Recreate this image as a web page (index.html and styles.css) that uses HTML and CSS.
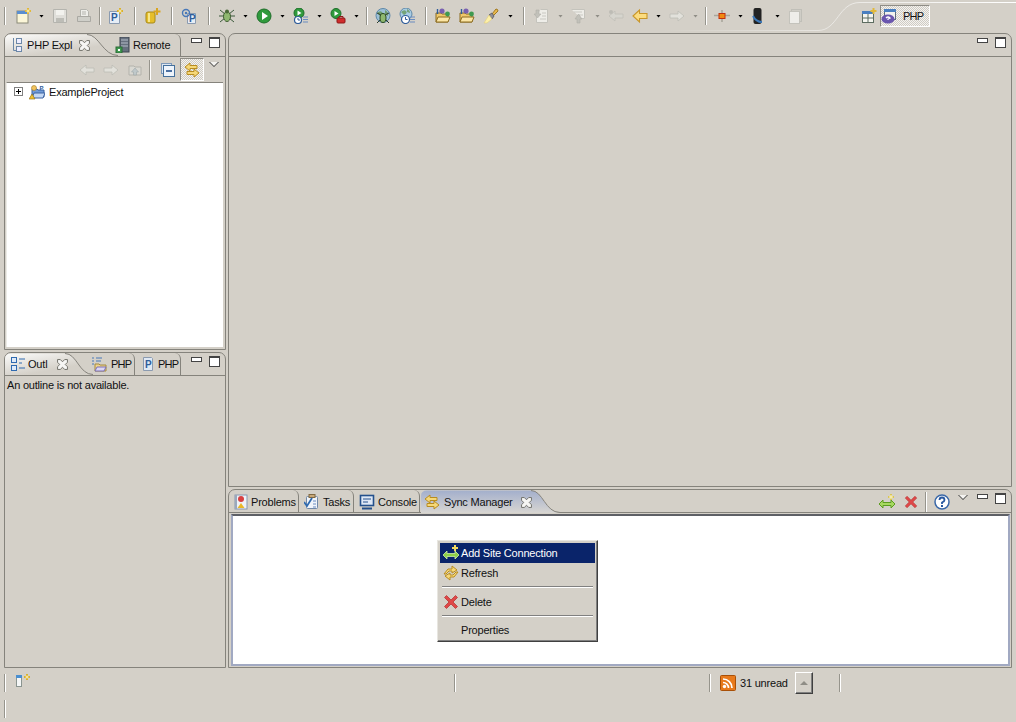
FILE: index.html
```html
<!DOCTYPE html>
<html lang="en">
<head>
<meta charset="utf-8">
<title>PHP - Eclipse</title>
<link rel="stylesheet" href="styles.css">
</head>
<body>
<svg class="defs" width="0" height="0">
  <defs>
    <linearGradient id="gw" x1="0" y1="0" x2="0.75" y2="1"><stop offset="0" stop-color="#fbfbfa"/><stop offset="0.75" stop-color="#d4d0c8"/></linearGradient>
    <linearGradient id="gb" x1="0" y1="0" x2="0" y2="1"><stop offset="0" stop-color="#a3afcc"/><stop offset="1" stop-color="#d8d6d2"/></linearGradient>
    <linearGradient id="gl" x1="0" y1="0" x2="1" y2="0"><stop offset="0" stop-color="#fff" stop-opacity="0"/><stop offset="1" stop-color="#fff"/></linearGradient>
    <symbol id="new" viewBox="0 0 16 16"><rect x="1" y="3" width="11" height="12" fill="#fbf6d8" stroke="#8a8a78"/><rect x="1" y="3" width="11" height="3" fill="#5b8fd0"/><path d="M12 0v6M9 3h6" stroke="#e2b93a" stroke-width="2"/><path d="M12 1.5v3M10.5 3h3" stroke="#fff6c0"/></symbol>
    <symbol id="save" viewBox="0 0 16 16"><path d="M1.5 1.5h13v13h-13z" fill="#e0dfda" stroke="#b4b4ae"/><rect x="4" y="2" width="8" height="5" fill="#f2f2ee"/><rect x="4" y="10" width="8" height="4" fill="#bdbdb7"/></symbol>
    <symbol id="print" viewBox="0 0 16 16"><path d="M4.5 1.5h6l2 2v5h-8z" fill="#eeeeea" stroke="#b4b4ae"/><path d="M1.5 8.5h13v5h-13z" fill="#cfcfc9" stroke="#aaa9a3"/><path d="M6 4h4M6 6h4" stroke="#b4b4ae"/></symbol>
    <symbol id="phpnew" viewBox="0 0 16 16"><path d="M1.5 3.5h9l1 1v11h-10z" fill="#e6edf6" stroke="#8b9bb0"/><text x="3" y="13" class="gp" fill="#2f5d9a">P</text><path d="M12 0v6M9 3h6" stroke="#d9b12e" stroke-width="2"/><path d="M12 1.5v3M10.5 3h3" stroke="#fff6c0"/></symbol>
    <symbol id="db" viewBox="0 0 16 16"><rect x="1" y="4" width="9" height="11" rx="2" fill="#e6be2a" stroke="#a88a18"/><rect x="3" y="5" width="2" height="9" fill="#f7e68a"/><path d="M12 0v7M8.5 3.5h7" stroke="#d9a520" stroke-width="2"/></symbol>
    <symbol id="phpat" viewBox="0 0 16 16"><path d="M6.5 5.5h8v10h-8z" fill="#e6edf6" stroke="#8b9bb0"/><circle cx="5" cy="5" r="3.5" fill="none" stroke="#4878b8" stroke-width="1.4"/><circle cx="5" cy="5" r="1.2" fill="#4878b8"/><text x="8" y="14" class="gp" fill="#2f5d9a">P</text></symbol>
    <symbol id="bug" viewBox="0 0 16 16"><path d="M1 2l5 4M15 2l-5 4M0 8h16M1 14l5-4M15 14l-5-4" stroke="#3c5a3c"/><ellipse cx="8" cy="8.5" rx="3.500" ry="5" fill="#8fb870" stroke="#3c5a30"/><circle cx="8" cy="3.5" r="2" fill="#4a6a38"/></symbol>
    <symbol id="run" viewBox="0 0 16 16"><circle cx="8" cy="8" r="7" fill="#2f9a3c" stroke="#1e6e2a"/><path d="M6 4l6 4-6 4z" fill="#fff"/></symbol>
    <symbol id="runh" viewBox="0 0 16 16"><circle cx="6" cy="5" r="5" fill="#2f9a3c" stroke="#1e6e2a"/><path d="M4.5 2.5l4 2.5-4 2.5z" fill="#fff"/><circle cx="5" cy="12" r="3.5" fill="#fff" stroke="#2f5d9a" stroke-width="1.2"/><path d="M5 10v2h2" stroke="#2f5d9a" fill="none"/><path d="M10 9h5M10 11.5h5M10 14h5" stroke="#6a8cc0"/></symbol>
    <symbol id="runc" viewBox="0 0 16 16"><circle cx="6" cy="5.5" r="5" fill="#2f9a3c" stroke="#1e6e2a"/><path d="M4.5 3l4 2.5-4 2.5z" fill="#fff"/><rect x="7" y="10" width="8" height="5" rx="1" fill="#d02c2c" stroke="#8c1818"/><path d="M9 10V8.5h4V10" stroke="#8c1818" fill="none"/></symbol>
    <symbol id="gbug" viewBox="0 0 16 16"><circle cx="8" cy="7.5" r="7" fill="#9cc0d8" stroke="#5f88a8"/><path d="M2 5q3-3 5-1t-2 4zM10 2q4 2 3 6l-3-2z" fill="#6f9c70"/><path d="M2 5l4 2M14 5l-4 2M2 15l4-4M14 15l-4-4" stroke="#2c3c2c"/><ellipse cx="8" cy="10" rx="3" ry="4.500" fill="#8fb870" stroke="#2c4a20"/></symbol>
    <symbol id="gclock" viewBox="0 0 16 16"><circle cx="7" cy="6" r="6" fill="#a8cce4" stroke="#5f88a8"/><path d="M2 4q3-3 5-1t-2 4zM8 1q3 1 3 4l-3-1z" fill="#74a478"/><circle cx="6.5" cy="11.5" r="4" fill="#fff" stroke="#2f5d9a" stroke-width="1.2"/><path d="M6.5 9v2.5h2" stroke="#2f5d9a" fill="none"/><path d="M11 9h5M11 11.5h5M11 14h5" stroke="#6a8cc0"/></symbol>
    <symbol id="fold" viewBox="0 0 16 16"><path d="M1 14V5h5l1 1h6v8z" fill="#efc86c" stroke="#8c6c20"/><path d="M1 14l2-5h12l-2 5z" fill="#fbe5a4" stroke="#8c6c20"/><circle cx="7" cy="3" r="2.6" fill="#7860b0"/><circle cx="12.5" cy="6" r="2.4" fill="#3f9a50"/><path d="M2.5 1v5" stroke="#2f5d9a" stroke-width="1.4"/></symbol>
    <symbol id="brush" viewBox="0 0 16 16"><path d="M9 6l4-5q2 0 2 2l-5 5z" fill="#e8b84c" stroke="#a07820"/><path d="M6 7l3-2 2 3-2 3z" fill="#8f8f96" stroke="#66666c"/><path d="M6 7l3 4-5 4H1z" fill="#fdf0a8" stroke="#e2cf78" stroke-width=".6"/></symbol>
    <symbol id="nexta" viewBox="0 0 16 16"><path d="M7.5 1.5h7v13h-11v-6" fill="#eeede8" stroke="#c4c3bc"/><path d="M9 5h4M9 8h4M7 11h6" stroke="#c9c8c2"/><path d="M3 2h3v4h2l-3.5 4L1 6h2z" fill="#c2c1ba" stroke="#b0afa8" stroke-width=".6"/></symbol>
    <symbol id="preva" viewBox="0 0 16 16"><path d="M1.5 1.5h13v9h-3" fill="#eeede8" stroke="#c4c3bc"/><path d="M4 4h8M9 7h4" stroke="#c9c8c2"/><path d="M7 15v-4H5l3.5-5L12 11h-2v4z" fill="#c2c1ba" stroke="#b0afa8" stroke-width=".6"/></symbol>
    <symbol id="gleft" viewBox="0 0 16 16"><path d="M1 8l6-5v3h8v4H7v3z" fill="#d6d5ce" stroke="#c0bfb8" stroke-width=".8"/><circle cx="3" cy="4" r="2" fill="#bdbcb5"/></symbol>
    <symbol id="yleft" viewBox="0 0 16 16"><path d="M1 8l6.5-6v3.5H15v5H7.5V14z" fill="#fbdc80" stroke="#c8962a" stroke-width="1.1"/></symbol>
    <symbol id="gright" viewBox="0 0 16 16"><path d="M15 8L9 3v3H1v4h8v3z" fill="#e2e1db" stroke="#bdbcb5" stroke-width=".8"/></symbol>
    <symbol id="cross" viewBox="0 0 16 16"><path d="M0 7.5h16M8 2v12" stroke="#a8a69c" stroke-width="1.6"/><rect x="5" y="5.5" width="6" height="5" fill="#f08a10" stroke="#c03010"/></symbol>
    <symbol id="dev" viewBox="0 0 16 16"><rect x="3.5" y="0" width="8" height="16" rx="2" fill="#222"/><path d="M3 8q3 6 9 6" stroke="#3c78b8" stroke-width="2" fill="none"/></symbol>
    <symbol id="page" viewBox="0 0 16 16"><rect x="4.5" y="1.5" width="10" height="12" fill="#cfcdc6" stroke="#c0bfb8"/><rect x="2.5" y="3.5" width="10" height="12" fill="#eeede9" stroke="#c4c3bc"/></symbol>
    <symbol id="persp" viewBox="0 0 16 16"><rect x="1.5" y="3.5" width="11" height="11" fill="#f6f6f0" stroke="#5c6c60"/><rect x="1" y="3" width="12" height="3" fill="#4a7fc0"/><path d="M7 6v8M2 10h10" stroke="#5c6c60"/><path d="M12.500 0v6M9.500 3h6" stroke="#e2b93a" stroke-width="2"/></symbol>
    <symbol id="phpp" viewBox="0 0 16 16"><rect x="3.500" y="1.500" width="11" height="10" fill="#f2f2ee" stroke="#5c6c80"/><rect x="3" y="1" width="12" height="3" fill="#4a7fc0"/><ellipse cx="7" cy="11" rx="6.500" ry="4.500" fill="#6a56ae"/><path d="M5 10q2-2 4 0l-2 1v1" stroke="#fff" fill="none" stroke-width="1.2"/></symbol>
    <symbol id="tree" viewBox="0 0 16 16"><rect x="6.500" y="1.500" width="5" height="5" fill="#eef" stroke="#6c88a8"/><rect x="6.500" y="9.500" width="5" height="5" fill="#eef" stroke="#6c88a8"/><path d="M3.500 1v12.500h3" stroke="#6c88a8" fill="none"/></symbol>
    <symbol id="remote" viewBox="0 0 16 16"><rect x="6" y="0" width="9" height="15" fill="#66707e" stroke="#3c4450"/><path d="M7 3h7M7 6h7M7 9h7" stroke="#b4bcc8"/><rect x="2" y="10" width="6" height="6" fill="#3f9a50" stroke="#2a6a34"/><rect x="4" y="12" width="2" height="2" fill="#fff"/></symbol>
    <symbol id="proj" viewBox="0 0 16 16"><path d="M3 13V5h5l1 1h6v7z" fill="#6f9ad8" stroke="#3c62a0"/><path d="M3 14l2-5h11l-2 5z" fill="#c4d8f4" stroke="#3c62a0"/><circle cx="5" cy="4" r="2.500" fill="#f2c460" stroke="#a07820" stroke-width=".6"/><path d="M0 15l3-5 3 5z" fill="#efc030" stroke="#8c6c10" stroke-width=".6"/><text x="10.500" y="5.500" class="gs" fill="#2f5d9a">P</text></symbol>
    <symbol id="outl" viewBox="0 0 16 16"><rect x="1.500" y="1.500" width="5" height="5" fill="#dfeaf8" stroke="#2f6ab0"/><rect x="1.500" y="9.500" width="5" height="5" fill="#dfeaf8" stroke="#2f6ab0"/><path d="M9 3h6M9 7h3M9 12h6" stroke="#2f6ab0"/></symbol>
    <symbol id="phpf" viewBox="0 0 16 16"><path d="M1 2h2M1 5h2M5 2h6M5 5h5M1 8h2" stroke="#4878b8" stroke-width="1.200"/><path d="M4 15V8h4l1 1h6v6z" fill="#efd48c" stroke="#a48a40"/><path d="M4 15l2-4h9l-2 4z" fill="#dcd6f4" stroke="#7a70b8"/></symbol>
    <symbol id="pfile" viewBox="0 0 16 16"><path d="M3.500 1.500h8l1 1v12h-9z" fill="#dfe8f4" stroke="#8b9bb0"/><text x="5" y="12" class="gp" fill="#2f5d9a">P</text></symbol>
    <symbol id="prob" viewBox="0 0 16 16"><rect x="2" y="1" width="12" height="14" fill="#eef2f8" stroke="#8898b0"/><rect x="2" y="1" width="2" height="14" fill="#9aa8bc"/><circle cx="8" cy="5" r="3" fill="#d84040"/><path d="M4.500 14l3.500-5 3.500 5z" fill="#eab828"/></symbol>
    <symbol id="task" viewBox="0 0 16 16"><rect x="2.500" y="2.500" width="11" height="12" rx="1" fill="#f0f4fa" stroke="#7088a8"/><rect x="5" y="0.500" width="6" height="3" fill="#c8a878" stroke="#806840"/><path d="M9 7h3M9 10h3M9 13h3" stroke="#6a8cc0"/><path d="M0 8l3 4 5-8" stroke="#2f6ab0" stroke-width="1.800" fill="none"/></symbol>
    <symbol id="cons" viewBox="0 0 16 16"><rect x="1.500" y="1.500" width="13" height="10" fill="#dfe8f6" stroke="#24508c" stroke-width="1.600"/><path d="M4 5h8M4 8h5" stroke="#24508c"/><path d="M3 14.500h10" stroke="#24508c" stroke-width="2"/></symbol>
    <symbol id="sync" viewBox="0 0 16 16"><path d="M1 5l5-4v2.500h7v3H6V9z" fill="#f6d878" stroke="#b88c20"/><path d="M15 11l-5-4v2.500H3v3h7V15z" fill="#f6d878" stroke="#b88c20"/></symbol>
    <symbol id="close" viewBox="0 0 10 10"><path d="M.5.500h2.500L5 2.500 7 .5h2.500V3L7.500 5l2 2v2.500H7L5 7.500 3 9.500H.5V7l2-2-2-2z" fill="#f6f6f4" stroke="#66665e" stroke-width=".8"/></symbol>
    <symbol id="gadd" viewBox="0 0 16 16"><path d="M0 10l4-4v2.500h8V6l4 4-4 4v-2.500H4V14z" fill="#a6d860" stroke="#5c9c20"/><path d="M12 0v6M9 3h6" stroke="#d8c458" stroke-width="2"/><path d="M12 1v4M10 3h4" stroke="#fff8c8"/></symbol>
    <symbol id="redx" viewBox="0 0 16 16"><path d="M1.500 3.500l2-2L8 6l4.500-4.500 2 2L10 8l4.500 4.500-2 2L8 10l-4.500 4.500-2-2L6 8z" fill="#e04848" stroke="#b83838" stroke-width=".8"/></symbol>
    <symbol id="help" viewBox="0 0 16 16"><circle cx="8" cy="8" r="7" fill="#fff" stroke="#3a68a8" stroke-width="1.500"/><path d="M5.500 6q0-2.500 2.500-2.500T10.500 6Q10.500 7.500 8 8.500V10" stroke="#2858a0" stroke-width="1.800" fill="none"/><rect x="7" y="11" width="2" height="2" fill="#2858a0"/></symbol>
    <symbol id="ga" viewBox="0 0 16 16"><path d="M1 8l6-5v3h8v4H7v3z" fill="#e2e1db" stroke="#bdbcb5" stroke-width=".8"/></symbol>
    <symbol id="home" viewBox="0 0 16 16"><path d="M2 13V4h5l1 1h6v8z" fill="#d9d8d2" stroke="#b4b3ac"/><path d="M8 6l3.500 4H9.500v3h-3v-3H4.500z" fill="#bfc8ca" stroke="#a0a8aa" stroke-width=".6"/></symbol>
    <symbol id="coll" viewBox="0 0 16 16"><rect x="1.500" y="1.500" width="10" height="10" fill="#dce6f2" stroke="#7c98b8"/><rect x="3.500" y="3.500" width="11" height="11" fill="#eef4fb" stroke="#44709c"/><path d="M6 9h6" stroke="#24508c" stroke-width="1.600"/></symbol>
    <symbol id="refresh" viewBox="0 0 16 16"><path d="M9 1l5 4-5 3V6H6L3 9H1l4-5h4z" fill="#f6d878" stroke="#b88c20"/><path d="M7 15l-5-4 5-3v2h3l3-3h2l-4 5H7z" fill="#f6d878" stroke="#b88c20"/></symbol>
    <symbol id="addsite" viewBox="0 0 16 16"><path d="M0 10l4-4v2.500h8V6l4 4-4 4v-2.500H4V14z" fill="#8fd048" stroke="#cfeea8" stroke-width=".8"/><path d="M12 0v6M9 3h6" stroke="#f2d860" stroke-width="2"/></symbol>
    <symbol id="rss" viewBox="0 0 16 16"><rect x=".5" y=".5" width="15" height="15" rx="1" fill="#e87a1c" stroke="#a85008"/><circle cx="4.500" cy="11.500" r="1.700" fill="#fff"/><path d="M3 7.500a5.500 5.500 0 0 1 5.500 5.500M3 4a9 9 0 0 1 9 9" stroke="#fff" stroke-width="1.700" fill="none"/></symbol>
    <symbol id="fview" viewBox="0 0 16 16"><rect x="0.500" y="1.500" width="5" height="11" fill="#f4f6f6" stroke="#8a9490"/><rect x="0" y="1" width="6" height="3" fill="#4a8fd0"/><path d="M11 0v6M8 3h6" stroke="#d9b12e" stroke-width="2"/><path d="M11 1.500v3M9.500 3h3" stroke="#fff6c0"/></symbol>
  </defs>
</svg>

<div class="app">
  <header class="toolbar">
    <i class="sep m0"></i>
    <svg class="i m10"><use href="#new"/></svg><i class="arr m7"></i>
    <svg class="i m8"><use href="#save"/></svg>
    <svg class="i m8"><use href="#print"/></svg>
    <i class="sep m7"></i>
    <svg class="i m7"><use href="#phpnew"/></svg>
    <i class="sep m10"></i>
    <svg class="i m9"><use href="#db"/></svg>
    <i class="sep m10"></i>
    <svg class="i m8"><use href="#phpat"/></svg>
    <i class="sep m11"></i>
    <svg class="i m9"><use href="#bug"/></svg><i class="arr m8"></i>
    <svg class="i m8"><use href="#run"/></svg><i class="arr m8"></i>
    <svg class="i m8"><use href="#runh"/></svg><i class="arr m8"></i>
    <svg class="i m8"><use href="#runc"/></svg><i class="arr m8"></i>
    <i class="sep m7"></i>
    <svg class="i m7"><use href="#gbug"/></svg>
    <svg class="i m8"><use href="#gclock"/></svg>
    <i class="sep m10"></i>
    <svg class="i m8"><use href="#fold"/></svg>
    <svg class="i m8"><use href="#fold"/></svg>
    <svg class="i m8"><use href="#brush"/></svg><i class="arr m9"></i>
    <i class="sep m10"></i>
    <svg class="i m8"><use href="#nexta"/></svg><i class="arr off m9"></i>
    <svg class="i m7"><use href="#preva"/></svg><i class="arr off m9"></i>
    <svg class="i m8"><use href="#gleft"/></svg>
    <svg class="i m8"><use href="#yleft"/></svg><i class="arr m8"></i>
    <svg class="i m8"><use href="#gright"/></svg><i class="arr off m8"></i>
    <i class="sep m7"></i>
    <svg class="i m7"><use href="#cross"/></svg><i class="arr m8"></i>
    <svg class="i m7"><use href="#dev"/></svg><i class="arr m9"></i>
    <svg class="i m7"><use href="#page"/></svg>
    <div class="persp">
      <svg class="i"><use href="#persp"/></svg>
      <div class="persp-btn"><svg class="i"><use href="#phpp"/></svg><span class="caps">PHP</span></div>
    </div>
    <svg class="swoosh" width="1016" height="33"><path d="M660 30.500H818C838 30.500 838 2.500 860 2.500H1016" fill="none" stroke="url(#gl)"/></svg>
  </header>

  <main class="workspace">
    <div class="col-left">
      <section class="panel p-expl">
        <div class="head">
          <div class="tab active t-expl">
            <svg class="shape" width="113" height="22"><path d="M0 22V6Q0 .5 6 .5H82C94 .5 98 21.500 113 21.500V22Z" fill="url(#gw)"/><path d="M82 .5C94 .5 98 21.500 113 21.500" fill="none" stroke="#85837c"/></svg>
            <svg class="i"><use href="#tree"/></svg><span class="lbl">PHP Expl</span><svg class="x"><use href="#close"/></svg>
          </div>
          <div class="tab t-remote"><svg class="i"><use href="#remote"/></svg><span class="lbl">Remote</span></div>
          <div class="winbtns"><i class="min"></i><i class="max"></i></div>
        </div>
        <div class="subbar">
          <svg class="i"><use href="#ga"/></svg>
          <svg class="i"><use href="#gright"/></svg>
          <svg class="i"><use href="#home"/></svg>
          <i class="sep short"></i>
          <svg class="i"><use href="#coll"/></svg>
          <div class="pressed"><svg class="i"><use href="#sync"/></svg></div>
          <i class="chev"></i>
        </div>
        <div class="tree">
          <div class="row"><i class="exp"></i><svg class="i"><use href="#proj"/></svg><span>ExampleProject</span></div>
        </div>
      </section>

      <section class="panel p-outl">
        <div class="head">
          <div class="tab active t-outl">
            <svg class="shape" width="88" height="22"><path d="M0 22V6Q0 .5 6 .5H60C72 .5 74 21.500 88 21.500V22Z" fill="url(#gw)"/><path d="M60 .5C72 .5 74 21.500 88 21.500" fill="none" stroke="#85837c"/></svg>
            <svg class="i"><use href="#outl"/></svg><span class="lbl">Outl</span><svg class="x"><use href="#close"/></svg>
          </div>
          <div class="tab t-phpf"><svg class="i"><use href="#phpf"/></svg><span class="lbl caps">PHP</span></div>
          <div class="tab t-pfile"><svg class="i"><use href="#pfile"/></svg><span class="lbl caps">PHP</span></div>
          <div class="winbtns"><i class="min"></i><i class="max"></i></div>
        </div>
        <p class="empty">An outline is not available.</p>
      </section>
    </div>

    <div class="col-right">
      <section class="panel p-editor">
        <div class="head"><div class="winbtns"><i class="min"></i><i class="max"></i></div></div>
      </section>

      <section class="panel p-sync">
        <div class="head">
          <div class="tab t-prob"><svg class="i"><use href="#prob"/></svg><span class="lbl">Problems</span></div>
          <div class="tab t-task"><svg class="i"><use href="#task"/></svg><span class="lbl">Tasks</span></div>
          <div class="tab t-cons"><svg class="i"><use href="#cons"/></svg><span class="lbl">Console</span></div>
          <div class="tab active t-sync">
            <svg class="shape" width="139" height="23"><path d="M0 23V6Q0 .5 6 .5H110C122 .5 124 22.500 139 22.500V23Z" fill="url(#gb)"/><path d="M110 .5C122 .5 124 22.500 139 22.500" fill="none" stroke="#85837c"/></svg>
            <svg class="i"><use href="#sync"/></svg><span class="lbl">Sync Manager</span><svg class="x"><use href="#close"/></svg>
          </div>
          <div class="viewtools">
            <svg class="i"><use href="#gadd"/></svg>
            <svg class="i red"><use href="#redx"/></svg>
            <i class="sep short"></i>
            <svg class="i"><use href="#help"/></svg>
            <i class="chev"></i>
          </div>
          <div class="winbtns"><i class="min"></i><i class="max"></i></div>
        </div>
        <div class="sync-body">
          <div class="sync-white">
            <ul class="menu">
              <li class="sel"><svg class="i"><use href="#addsite"/></svg>Add Site Connection</li>
              <li><svg class="i"><use href="#refresh"/></svg>Refresh</li>
              <li class="div"></li>
              <li><svg class="i"><use href="#redx"/></svg>Delete</li>
              <li class="div"></li>
              <li class="last"><span class="noicon"></span>Properties</li>
            </ul>
          </div>
        </div>
      </section>
    </div>
  </main>

  <footer class="status">
    <div class="st-row st-one">
      <i class="sep tall"></i>
      <svg class="i fview"><use href="#fview"/></svg>
      <i class="sep tall s2"></i>
      <i class="sep tall s3"></i>
      <svg class="i rss"><use href="#rss"/></svg>
      <span class="unread">31 unread</span>
      <div class="upbtn"><i></i></div>
      <i class="sep tall s4"></i>
    </div>
    <div class="st-row"><i class="sep tall"></i></div>
  </footer>
</div>
</body>
</html>
```

FILE: styles.css
```css
* { box-sizing: border-box; }
html, body { margin: 0; padding: 0; }
body {
  background: #d4d0c8;
  font-family: "Liberation Sans", Arial, sans-serif;
  font-size: 11px;
  letter-spacing: -0.2px;
  color: #111;
  overflow: hidden;
}
.defs { position: absolute; }
.gp { font: bold 10px "Liberation Sans", sans-serif; }
.gs { font: bold 6px "Liberation Sans", sans-serif; }
.app { width: 1016px; height: 722px; display: flex; flex-direction: column; background: #d4d0c8; }
i { display: block; flex: none; }
.i { width: 16px; height: 16px; flex: none; display: block; overflow: visible; }
.caps { letter-spacing: -0.8px; }

/* main toolbar */
.toolbar { height: 33px; flex: none; display: flex; align-items: center; padding: 0 0 1px 4px; position: relative; }
.sep { width: 2px; height: 18px; background: #fff; border-left: 1px solid #96948c; }
.arr { width: 5px; height: 3px; box-sizing: content-box; background: #000; clip-path: polygon(0 0, 100% 0, 50% 100%); }
.arr.off { background: #8f8d86; }
.m0 { margin-left: 0; } .m7 { margin-left: 7px; } .m8 { margin-left: 8px; } .m9 { margin-left: 9px; }
.m10 { margin-left: 10px; } .m11 { margin-left: 11px; }
.persp { margin-left: auto; margin-right: 86px; display: flex; align-items: center; gap: 3px; }
.persp-btn {
  width: 50px; height: 22px; display: flex; align-items: center; gap: 6px;
  background: repeating-conic-gradient(#cfcbc3 0 25%, #f4f3f0 0 50%) 0 0 / 2px 2px;
  border: 1px solid; border-color: #8f8d86 #fff #fff #8f8d86;
}
.swoosh { position: absolute; left: 0; top: 0; pointer-events: none; }

/* workspace */
.workspace { height: 635px; flex: none; display: flex; gap: 2px; padding: 0 4px; }
.col-left { width: 222px; flex: none; display: flex; flex-direction: column; gap: 2px; }
.col-right { flex: 1; display: flex; flex-direction: column; gap: 2px; min-width: 0; }
.panel { border: 1px solid #85837c; border-radius: 7px 7px 0 0; background: #d4d0c8; display: flex; flex-direction: column; min-height: 0; }
.p-expl { height: 317px; }
.p-outl { height: 316px; }
.p-editor { height: 454px; }
.p-sync { height: 179px; }
.head { height: 23px; flex: none; border-bottom: 1px solid #85837c; display: flex; align-items: stretch; position: relative; }

/* tabs */
.tab { position: relative; display: flex; align-items: center; height: 22px; flex: none; }
.tab .lbl { position: relative; white-space: nowrap; }
.tab .i, .tab .x { position: relative; }
.shape { position: absolute; left: 0; top: 0; display: block; }
.x { width: 11px; height: 11px; flex: none; display: block; }
.tab:not(.active) { border-right: 1px solid #85837c; border-top-right-radius: 6px; }

.t-expl { width: 113px; padding-left: 5px; }
.t-expl .lbl { margin-left: 1px; }
.t-expl .x { margin-left: 7px; }
.t-remote { margin-left: -4px; width: 67px; }
.t-remote .lbl { margin-left: 3px; }

.t-outl { width: 88px; padding-left: 5px; }
.t-outl .lbl { margin-left: 2px; }
.t-outl .x { margin-left: 10px; }
.t-phpf { margin-left: -2px; width: 44px; }
.t-phpf .lbl { margin-left: 4px; }
.t-pfile { padding-left: 5px; width: 46px; }
.t-pfile .lbl { margin-left: 2px; }

.p-sync .tab { height: 23px; padding-top: 1px; }
.t-prob { margin-left: 2px; padding-left: 2px; width: 68px; }
.t-prob .lbl { margin-left: 2px; }
.t-task { padding-left: 5px; width: 55px; }
.t-task .lbl { margin-left: 3px; }
.t-cons { padding-left: 5px; width: 66px; }
.t-cons .lbl { margin-left: 3px; }
.t-sync { width: 139px; padding-left: 3px; margin-left: 1px; }
.t-sync .lbl { margin-left: 4px; }
.t-sync .x { margin-left: 8px; }

.winbtns { margin-left: auto; display: flex; align-items: flex-start; padding: 3px 5px 0 0; gap: 7px; }
.viewtools + .winbtns { margin-left: 0; }
.min { width: 11px; height: 5px; background: #fff; border: 1px solid #444; margin-top: 1px; }
.max { width: 11px; height: 11px; background: #fff; border: 1px solid #444; border-top-width: 2px; }

.viewtools { margin-left: auto; display: flex; align-items: center; padding: 1px 9px 0 0; }
.viewtools .red { margin-left: 9px; width: 14px; height: 14px; }
.viewtools .sep { margin: 0 7px; }
.viewtools .chev { margin: -8px 0 0 8px; }
.sep.short { height: 20px; }

.chev { width: 0; height: 0; border-style: solid; border-width: 5px 5px 0; border-color: #333 transparent transparent; position: relative; }
.chev::after { content: ""; position: absolute; left: -4px; top: -5px; border-style: solid; border-width: 4px 4px 0; border-color: #f4f3f0 transparent transparent; }

/* explorer */
.subbar { height: 25px; flex: none; display: flex; align-items: center; padding-left: 74px; }
.subbar .i + .i { margin-left: 8px; }
.subbar .sep { margin: 0 9px 0 6px; }
.pressed {
  width: 24px; height: 23px; display: flex; align-items: center; justify-content: center; margin-left: 4px;
  background: repeating-conic-gradient(#cfcbc3 0 25%, #f4f3f0 0 50%) 0 0 / 2px 2px;
  border: 1px solid; border-color: #8f8d86 #fff #fff #8f8d86;
}
.subbar .chev { margin: -10px 0 0 5px; }
.tree { flex: 1; margin: 0 2px 2px 1px; background: #fff; border-top: 1px solid #85837c; border-left: 1px solid #ecebe6; }
.row { display: flex; align-items: center; height: 17px; padding-left: 7px; }
.row .i { margin-left: 6px; }
.row span { margin-left: 4px; }
.exp { width: 9px; height: 9px; border: 1px solid #808080; background: linear-gradient(#000, #000) center / 5px 1px no-repeat, linear-gradient(#000, #000) center / 1px 5px no-repeat, #fff; }

.empty { margin: 3px 0 0 2px; font-size: 11px; line-height: 13px; }

/* sync manager */
.sync-body { flex: 1; padding: 1px 1px 1px 2px; min-height: 0; }
.sync-white { height: 100%; background: #fff; border: 2px solid #a1a9c2; border-top-color: #5e6066; position: relative; }

.menu {
  position: absolute; left: 204px; top: 24px; width: 161px; height: 102px; margin: 0; padding: 2px;
  list-style: none; background: #d4d0c8;
  border: 1px solid; border-color: #e8e6e0 #404040 #404040 #e8e6e0;
  box-shadow: inset -1px -1px 0 #808080;
}
.menu li { height: 20px; display: flex; align-items: center; padding-left: 3px; gap: 2px; white-space: nowrap; }
.menu li.sel { background: #0a246a; color: #fff; width: 155px; }
.menu li.div { height: 2px; margin: 3px 2px 4px; padding: 0; background: #fff; border-top: 1px solid #808080; }
.menu li.last { height: 18px; }
.noicon { width: 16px; flex: none; }

/* status */
.status { flex: 1; display: flex; flex-direction: column; }
.st-row { height: 28px; display: flex; align-items: center; padding-left: 4px; flex: none; }
.st-row .sep.tall { height: 18px; }
.st-row + .st-row { height: 26px; }
.st-one { padding-top: 1px; }
.fview { margin: -1px 0 0 10px; }
.s2 { margin-left: 422px; }
.s3 { margin-left: 253px; }
.rss { margin-left: 9px; }
.unread { margin-left: 4px; width: 49px; white-space: nowrap; }
.upbtn {
  width: 18px; height: 22px; margin-left: 6px; display: flex; align-items: center; justify-content: center;
  border: 1px solid; border-color: #fff #404040 #404040 #fff; box-shadow: inset -1px -1px 0 #808080;
}
.upbtn i { width: 0; height: 0; border-style: solid; border-width: 0 4px 4px; border-color: transparent transparent #8f8d86; }
.s4 { margin-left: 26px; }
```
